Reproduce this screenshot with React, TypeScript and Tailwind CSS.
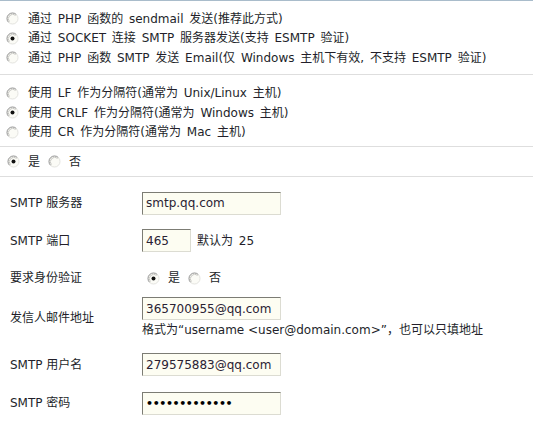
import React from "react";

function Radio({ checked = false }: { checked?: boolean }) {
  return (
    <svg width="13" height="13" viewBox="0 0 13 13" className="shrink-0">
      <circle cx="6.5" cy="6.5" r="5.5" fill="#fbfbf6" />
      <path d="M10.4 2.6 A5.5 5.5 0 0 0 2.6 10.4" fill="none" stroke="#8f8f8f" strokeWidth="1" />
      <path d="M2.6 10.4 A5.5 5.5 0 0 0 10.4 2.6" fill="none" stroke="#e4e4e0" strokeWidth="1" />
      <path d="M9.6 3.4 A4.4 4.4 0 0 0 3.4 9.6" fill="none" stroke="#c8c8c4" strokeWidth="1" />
      {checked && <circle cx="6.5" cy="6.5" r="2" fill="#111" />}
    </svg>
  );
}

function Option({ checked, children }: { checked?: boolean; children: React.ReactNode }) {
  return (
    <div className="flex h-[19.5px] items-center pl-[6px]">
      <Radio checked={checked} />
      <span className="ml-[9px] whitespace-nowrap [word-spacing:2px]">{children}</span>
    </div>
  );
}

function YesNo({ yes = true }: { yes?: boolean }) {
  return (
    <div className="flex items-center">
      <Radio checked={yes} />
      <span className="ml-[8px]">是</span>
      <span className="ml-[8px]"><Radio checked={!yes} /></span>
      <span className="ml-[8px]">否</span>
    </div>
  );
}

function Field({ value, w = "w-[139px]", password = false }: { value: string; w?: string; password?: boolean }) {
  return (
    <div
      className={`${w} flex h-[23px] items-center border border-t-[#7c7c74] border-l-[#7c7c74] border-r-[#dcdcd2] border-b-[#dcdcd2] bg-[#fdfdf2] pl-[3px] text-[12px] text-[#2a2233]`}
    >
      {password ? <span className="text-[11px] font-bold leading-none tracking-[-0.4px] text-black">{value}</span> : value}
    </div>
  );
}

function Row({ label, h, children }: { label: string; h: string; children: React.ReactNode }) {
  return (
    <div className={`flex ${h} items-center`}>
      <div className="w-[142px] shrink-0 pl-[10px]">{label}</div>
      <div>{children}</div>
    </div>
  );
}

export default function App() {
  return (
    <div
      className="h-[425px] w-[533px] overflow-hidden bg-white text-[12px] text-[#231f2a]"
      style={{ fontFamily: '"DejaVu Sans", Verdana, "Noto Sans CJK SC", sans-serif' }}
    >
      <div className="border-t border-[#a9bccb]" />

      <div className="pt-[8px] pb-[6px]">
        <Option>通过 PHP 函数的 sendmail 发送(推荐此方式)</Option>
        <Option checked>通过 SOCKET 连接 SMTP 服务器发送(支持 ESMTP 验证)</Option>
        <Option>通过 PHP 函数 SMTP 发送 Email(仅 Windows 主机下有效, 不支持 ESMTP 验证)</Option>
      </div>
      <div className="border-t border-[#dedede]" />

      <div className="pt-[9px] pb-[4px]">
        <Option>使用 LF 作为分隔符(通常为 Unix/Linux 主机)</Option>
        <Option checked>使用 CRLF 作为分隔符(通常为 Windows 主机)</Option>
        <Option>使用 CR 作为分隔符(通常为 Mac 主机)</Option>
      </div>
      <div className="border-t border-[#dedede]" />

      <div className="flex h-[29px] items-center pl-[7px]">
        <YesNo />
      </div>
      <div className="border-t border-[#dedede]" />

      <div className="pt-[7px]">
        <Row label="SMTP 服务器" h="h-[38px]">
          <Field value="smtp.qq.com" />
        </Row>
        <Row label="SMTP 端口" h="h-[37px]">
          <div className="flex items-center">
            <Field value="465" w="w-[49px]" />
            <span className="ml-[6px] [word-spacing:2px]">默认为 25</span>
          </div>
        </Row>
        <Row label="要求身份验证" h="h-[38px]">
          <div className="pl-[5px]">
            <YesNo />
          </div>
        </Row>
        <div className="flex h-[48px] items-center pb-[7px]">
          <div className="w-[142px] shrink-0 pl-[10px]">发信人邮件地址</div>
          <div className="flex flex-col">
            <Field value="365700955@qq.com" />
            <div className="mt-[2px] h-[16px] whitespace-nowrap leading-[16px]">
              格式为“username &lt;user@domain.com&gt;”，也可以只填地址
            </div>
          </div>
        </div>
        <Row label="SMTP 用户名" h="h-[39px]">
          <Field value="279575883@qq.com" />
        </Row>
        <Row label="SMTP 密码" h="h-[38px]">
          <Field value="•••••••••••••" password />
        </Row>
      </div>
    </div>
  );
}
